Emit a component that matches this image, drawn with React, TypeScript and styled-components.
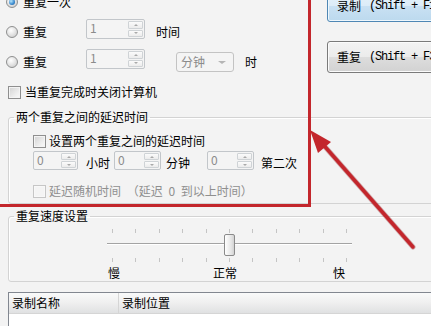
import styled, { createGlobalStyle } from 'styled-components';

const GlobalStyle = createGlobalStyle`
  html, body {
    margin: 0;
    padding: 0;
    background: #f3f3f3;
  }
  body {
    font-family: "Noto Sans CJK SC", "Liberation Sans", sans-serif;
    font-size: 12px;
    color: #000;
  }
`;

const Screen = styled.div`
  position: relative;
  width: 431px;
  height: 326px;
  overflow: hidden;
  background: #f3f3f3;
`;

const Dialog = styled.div`
  display: flex;
  flex-direction: column;
  width: 560px;
  margin-top: -10px;
`;

const TopSection = styled.div`
  display: flex;
  align-items: flex-start;
  height: 113px;
`;

const OptionsPane = styled.div`
  display: flex;
  flex-direction: column;
  gap: 8px;
  width: 327px;
  padding-top: 1px;
`;

const ButtonPane = styled.div`
  display: flex;
  flex-direction: column;
  gap: 19px;
`;

const Row = styled.div<{ $height?: number; $top?: number }>`
  display: flex;
  align-items: center;
  height: ${p => p.$height ?? 22}px;
  margin-top: ${p => p.$top ?? 0}px;
  line-height: 14px;
  white-space: nowrap;
`;

const Radio = styled.span<{ $checked?: boolean }>`
  position: relative;
  flex: none;
  width: 12px;
  height: 12px;
  margin: 0 5px 0 6px;
  box-sizing: border-box;
  border-radius: 50%;
  border: 1px solid #8e8f8f;
  background: radial-gradient(circle at 40% 35%, #ffffff 0%, #e6e6e6 45%, #c4c4c4 100%);

  &::after {
    content: '';
    display: ${p => (p.$checked ? 'block' : 'none')};
    position: absolute;
    left: 2px;
    top: 2px;
    width: 6px;
    height: 6px;
    border-radius: 50%;
    background: radial-gradient(circle at 35% 35%, #b9e6fb 0%, #3f8fd2 55%, #16508f 100%);
  }
`;

const OptionLabel = styled.span<{ $width?: number }>`
  flex: none;
  width: ${p => (p.$width ? `${p.$width}px` : 'auto')};
`;

const Text = styled.span<{ $left?: number; $disabled?: boolean }>`
  flex: none;
  margin-left: ${p => p.$left ?? 0}px;
  color: ${p => (p.$disabled ? '#8f8f8f' : '#000')};
  word-spacing: ${p => (p.$disabled ? '3px' : 'normal')};
`;

const Checkbox = styled.span<{ $left?: number; $disabled?: boolean }>`
  flex: none;
  width: 13px;
  height: 13px;
  margin-left: ${p => p.$left ?? 0}px;
  margin-right: 3px;
  box-sizing: border-box;
  border: 1px solid ${p => (p.$disabled ? '#c6c6c6' : '#8f8f8f')};
  background: ${p =>
    p.$disabled
      ? '#f4f4f4'
      : 'linear-gradient(135deg, #d2d2d2 0%, #ececec 60%, #fafafa 100%)'};
  box-shadow: inset 0 0 0 1px ${p => (p.$disabled ? '#f8f8f8' : '#f4f4f4')};
`;

const SpinBox = styled.div<{ $width: number; $height: number; $left?: number }>`
  flex: none;
  display: flex;
  align-self: flex-start;
  width: ${p => p.$width}px;
  height: ${p => p.$height}px;
  margin-left: ${p => p.$left ?? 0}px;
  margin-top: -2px;
  box-sizing: border-box;
  border: 1px solid #c2c6ca;
  border-radius: 2px;
  background: #f4f4f4;
`;

const SpinValue = styled.span`
  flex: 1;
  padding: 1px 0 0 3px;
  color: #8b8b8b;
  line-height: 14px;
`;

const SpinButtons = styled.div`
  display: flex;
  flex-direction: column;
  gap: 1px;
  width: 15px;
  padding: 1px;
`;

const SpinButton = styled.span<{ $down?: boolean }>`
  flex: 1;
  display: flex;
  align-items: center;
  justify-content: center;
  box-sizing: border-box;
  border: 1px solid #cfd3d6;
  border-radius: 1px;
  background: linear-gradient(#fbfbfb, #ececec);

  &::after {
    content: '';
    border-left: 2px solid transparent;
    border-right: 2px solid transparent;
    ${p =>
      p.$down ? 'border-top: 2px solid #a9a9a9;' : 'border-bottom: 2px solid #a9a9a9;'}
  }
`;

const Dropdown = styled.div<{ $left: number }>`
  flex: none;
  display: flex;
  align-items: center;
  justify-content: space-between;
  width: 58px;
  height: 20px;
  margin-left: ${p => p.$left}px;
  padding: 0 7px 0 4px;
  box-sizing: border-box;
  border: 1px solid #c3c3c3;
  border-radius: 3px;
  background: #f4f4f4;
  color: #8b8b8b;

  &::after {
    content: '';
    border-left: 4px solid transparent;
    border-right: 4px solid transparent;
    border-top: 3px solid #b5b5b5;
  }
`;

const CommandButton = styled.div<{ $hot?: boolean }>`
  display: flex;
  align-items: center;
  width: 140px;
  height: 32px;
  padding-left: 9px;
  box-sizing: border-box;
  white-space: nowrap;
  overflow: hidden;
  border: 1px solid ${p => (p.$hot ? '#4f87b4' : '#7a7a7a')};
  border-radius: 3px;
  box-shadow: inset 0 0 0 1px ${p => (p.$hot ? '#eef7fd' : '#fbfbfb')};
  background: ${p =>
    p.$hot
      ? 'linear-gradient(#e7f2fa 0%, #dcecf8 50%, #c9e1f3 51%, #bcd9ee 100%)'
      : 'linear-gradient(#f3f3f3 0%, #ebebeb 50%, #dddddd 51%, #d2d2d2 100%)'};
  line-height: 14px;
`;

const HotKey = styled.span`
  margin-left: 8px;
  font-family: "Liberation Mono", monospace;
  font-size: 12px;
  letter-spacing: -1.2px;
`;

const GroupBox = styled.fieldset<{ $top: number; $pt: number; $pb: number }>`
  width: 500px;
  margin: ${p => p.$top}px 0 0 8px;
  padding: ${p => p.$pt}px 0 ${p => p.$pb}px 5px;
  border: 1px solid #d3d3d3;
  border-radius: 3px;
  box-shadow: inset 1px 1px 0 #ffffff;
  min-width: 0;
`;

const Legend = styled.legend`
  padding: 0 2px;
  line-height: 14px;
`;

const Slider = styled.div`
  display: grid;
  width: 245px;
  height: 33px;
  margin-left: 93px;

  & > * {
    grid-area: 1 / 1;
  }
`;

const TickRow = styled.div<{ $bottom?: boolean }>`
  display: flex;
  justify-content: space-between;
  align-self: ${p => (p.$bottom ? 'end' : 'start')};
  height: 4px;
  padding: 0 5px;
`;

const Tick = styled.span`
  width: 1px;
  height: 4px;
  background: #c4c4c4;
`;

const Track = styled.div`
  align-self: center;
  height: 1px;
  margin-bottom: 4px;
  background: #a3a3a3;
  border-bottom: 1px solid #ffffff;
`;

const Thumb = styled.div`
  align-self: center;
  justify-self: center;
  width: 11px;
  height: 22px;
  margin-bottom: 2px;
  box-sizing: border-box;
  border: 1px solid #8a8a8a;
  border-radius: 2px;
  background: linear-gradient(to right, #ffffff, #e4e4e4 70%, #d2d2d2);
`;

const SpeedLabels = styled.div`
  display: grid;
  grid-template-columns: 105px 120px auto;
  margin: 4px 0 0 94px;
  line-height: 14px;
`;

const ListView = styled.div`
  width: 500px;
  height: 80px;
  margin: 10px 0 0 8px;
  border: 1px solid #828790;
  background: #ffffff;
`;

const ListHeader = styled.div`
  display: flex;
  height: 20px;
  background: linear-gradient(#f9fafa 0%, #f0f0f0 45%, #e0e1e2 100%);
  border-bottom: 1px solid #d5d5d5;
`;

const HeaderCell = styled.div<{ $width?: number }>`
  width: ${p => (p.$width ? `${p.$width}px` : 'auto')};
  flex: ${p => (p.$width ? 'none' : '1')};
  padding-left: 3px;
  line-height: 20px;
  border-right: 1px solid #d5d5d5;
`;

const Highlight = styled.div`
  position: absolute;
  left: -10px;
  top: -10px;
  width: 321px;
  height: 217px;
  box-sizing: border-box;
  border: 3px solid #c3262c;
  pointer-events: none;
`;

const ArrowLayer = styled.svg`
  position: absolute;
  left: 0;
  top: 0;
  pointer-events: none;
`;

function Spinner({ value, width, height, left }: { value: string; width: number; height: number; left?: number }) {
  return (
    <SpinBox $width={width} $height={height} $left={left}>
      <SpinValue>{value}</SpinValue>
      <SpinButtons>
        <SpinButton />
        <SpinButton $down />
      </SpinButtons>
    </SpinBox>
  );
}

const ticks = Array.from({ length: 11 }, (_, i) => i);

export default function App() {
  return (
    <Screen>
      <GlobalStyle />
      <Dialog>
        <TopSection>
          <OptionsPane>
            <Row>
              <Radio $checked />
              <OptionLabel>重复一次</OptionLabel>
            </Row>
            <Row>
              <Radio />
              <OptionLabel $width={63}>重复</OptionLabel>
              <Spinner value="1" width={59} height={20} />
              <Text $left={11}>时间</Text>
            </Row>
            <Row>
              <Radio />
              <OptionLabel $width={63}>重复</OptionLabel>
              <Spinner value="1" width={59} height={20} />
              <Dropdown $left={31}>分钟</Dropdown>
              <Text $left={11}>时</Text>
            </Row>
            <Row>
              <Checkbox $left={8} />
              <Text $left={1}>当重复完成时关闭计算机</Text>
            </Row>
          </OptionsPane>
          <ButtonPane>
            <CommandButton $hot>
              录制<HotKey>(Shift + F1)</HotKey>
            </CommandButton>
            <CommandButton>
              重复<HotKey>(Shift + F3)</HotKey>
            </CommandButton>
          </ButtonPane>
        </TopSection>

        <GroupBox $top={7} $pt={9} $pb={4}>
          <Legend>两个重复之间的延迟时间</Legend>
          <Row $height={16}>
            <Checkbox $left={19} />
            <Text>设置两个重复之间的延迟时间</Text>
          </Row>
          <Row $height={19} $top={4}>
            <Spinner value="0" width={45} height={19} left={19} />
            <Text $left={8}>小时</Text>
            <Spinner value="0" width={47} height={19} left={4} />
            <Text $left={5}>分钟</Text>
            <Spinner value="0" width={47} height={19} left={17} />
            <Text $left={7}>第二次</Text>
          </Row>
          <Row $height={16} $top={11}>
            <Checkbox $left={19} $disabled />
            <Text $disabled>延迟随机时间 （延迟 0 到以上时间）</Text>
          </Row>
        </GroupBox>

        <GroupBox $top={5} $pt={6} $pb={1}>
          <Legend>重复速度设置</Legend>
          <Slider>
            <TickRow>
              {ticks.map(i => (
                <Tick key={i} />
              ))}
            </TickRow>
            <Track />
            <Thumb />
            <TickRow $bottom>
              {ticks.map(i => (
                <Tick key={i} />
              ))}
            </TickRow>
          </Slider>
          <SpeedLabels>
            <span>慢</span>
            <span>正常</span>
            <span>快</span>
          </SpeedLabels>
        </GroupBox>

        <ListView>
          <ListHeader>
            <HeaderCell $width={106}>录制名称</HeaderCell>
            <HeaderCell>录制位置</HeaderCell>
          </ListHeader>
        </ListView>
      </Dialog>

      <Highlight />
      <ArrowLayer width={431} height={326} viewBox="0 0 431 326">
        <line x1={413} y1={247} x2={320} y2={141} stroke="#8e1b1f" strokeWidth={5} strokeLinecap="round" opacity={0.35} />
        <line x1={413} y1={247} x2={320} y2={141} stroke="#c3262c" strokeWidth={3.5} strokeLinecap="round" />
        <polygon points="310,130 331,142 318,153" fill="#c3262c" />
      </ArrowLayer>
    </Screen>
  );
}
